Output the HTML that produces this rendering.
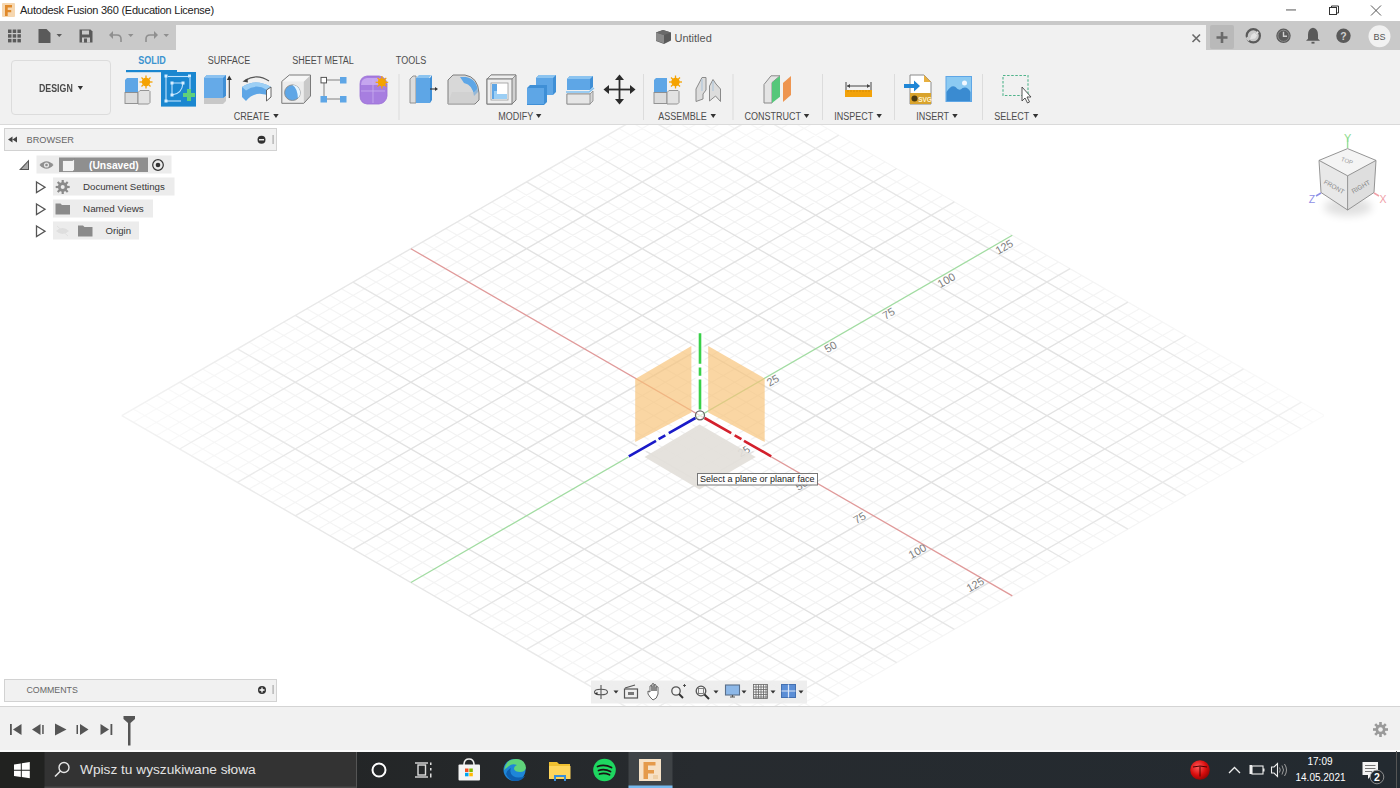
<!DOCTYPE html>
<html><head><meta charset="utf-8">
<style>
*{margin:0;padding:0;box-sizing:border-box}
html,body{width:1400px;height:788px;overflow:hidden;background:#fff;font-family:"Liberation Sans",sans-serif}
.a{position:absolute}
#title{left:0;top:0;width:1400px;height:21px;background:#fff}
#title .t{left:20px;top:4px;font-size:11px;letter-spacing:-0.25px;color:#222;white-space:nowrap}
#tabbar{left:0;top:21px;width:1400px;height:29px;background:#c9c9c9}
#tab{left:176px;top:25px;width:1030px;height:26px;background:#f1f1f1}
#toolbar{left:0;top:50px;width:1400px;height:75px;background:#f1f1f1;border-bottom:1px solid #dadada}
.lbl{font-size:10px;line-height:10px;color:#4d4d4d;white-space:nowrap;transform:translateX(-50%) scaleX(0.9)}
.tabl{font-size:10px;line-height:10px;color:#4d4d4d;white-space:nowrap;transform:translateX(-50%) scaleX(0.9)}
.ar{display:inline-block;width:0;height:0;border-left:3px solid transparent;border-right:3px solid transparent;border-top:4px solid #333;position:relative;top:-2px;margin-left:1px}
.sep{width:1px;top:74px;height:46px;background:#dedede}
#viewport{left:0;top:125px;width:1400px;height:581px;background:#fff;overflow:hidden}
#timeline{left:0;top:706px;width:1400px;height:46px;background:#f1f1f1;border-top:1px solid #d4d4d4}
#taskbar{left:0;top:751px;width:1400px;height:37px;background:#232629}
</style></head><body>
<svg width="1400" height="788" viewBox="0 0 1400 788" style="position:absolute;left:0;top:0">
<defs><radialGradient id="gf" cx="0.5" cy="0.5" r="0.5"><stop offset="0.6" stop-color="#fff" stop-opacity="1"/><stop offset="1" stop-color="#fff" stop-opacity="0.4"/></radialGradient><mask id="gm"><rect x="121" y="68" width="1203" height="694" fill="url(#gf)"/></mask></defs>
<g mask="url(#gm)">
<path d="M133.3 422.3L734.7 75.0M133.3 408.9L734.7 756.2M144.9 429.0L746.3 81.7M144.9 402.2L746.3 749.5M156.4 435.6L757.8 88.4M156.4 395.6L757.8 742.8M168.0 442.3L769.4 95.1M168.0 388.9L769.4 736.1M191.1 455.7L792.5 108.4M191.1 375.5L792.5 722.8M202.7 462.3L804.1 115.1M202.7 368.9L804.1 716.1M214.3 469.0L815.6 121.8M214.3 362.2L815.6 709.4M225.8 475.7L827.2 128.5M225.8 355.5L827.2 702.7M249.0 489.1L850.3 141.8M249.0 342.1L850.3 689.4M260.5 495.7L861.9 148.5M260.5 335.5L861.9 682.7M272.1 502.4L873.5 155.2M272.1 328.8L873.5 676.0M283.7 509.1L885.0 161.9M283.7 322.1L885.0 669.3M306.8 522.4L908.2 175.2M306.8 308.8L908.2 656.0M318.4 529.1L919.7 181.9M318.4 302.1L919.7 649.3M329.9 535.8L931.3 188.6M329.9 295.4L931.3 642.6M341.5 542.5L942.9 195.2M341.5 288.7L942.9 636.0M364.6 555.8L966.0 208.6M364.6 275.4L966.0 622.6M376.2 562.5L977.6 215.3M376.2 268.7L977.6 615.9M387.7 569.2L989.1 222.0M387.7 262.0L989.1 609.2M399.3 575.9L1000.7 228.6M399.3 255.3L1000.7 602.6M422.4 589.2L1023.8 242.0M422.4 242.0L1023.8 589.2M434.0 595.9L1035.4 248.7M434.0 235.3L1035.4 582.5M445.6 602.6L1047.0 255.3M445.6 228.6L1047.0 575.9M457.1 609.2L1058.5 262.0M457.1 222.0L1058.5 569.2M480.3 622.6L1081.6 275.4M480.3 208.6L1081.6 555.8M491.8 629.3L1093.2 282.1M491.8 201.9L1093.2 549.1M503.4 636.0L1104.8 288.7M503.4 195.2L1104.8 542.5M515.0 642.6L1116.3 295.4M515.0 188.6L1116.3 535.8M538.1 656.0L1139.5 308.8M538.1 175.2L1139.5 522.4M549.7 662.7L1151.0 315.4M549.7 168.5L1151.0 515.8M561.2 669.3L1162.6 322.1M561.2 161.9L1162.6 509.1M572.8 676.0L1174.2 328.8M572.8 155.2L1174.2 502.4M595.9 689.4L1197.3 342.1M595.9 141.8L1197.3 489.1M607.5 696.1L1208.9 348.8M607.5 135.1L1208.9 482.4M619.0 702.7L1220.4 355.5M619.0 128.5L1220.4 475.7M630.6 709.4L1232.0 362.2M630.6 121.8L1232.0 469.0M653.7 722.8L1255.1 375.5M653.7 108.4L1255.1 455.7M665.3 729.4L1266.7 382.2M665.3 101.8L1266.7 449.0M676.9 736.1L1278.2 388.9M676.9 95.1L1278.2 442.3M688.4 742.8L1289.8 395.6M688.4 88.4L1289.8 435.6M711.6 756.2L1312.9 408.9M711.6 75.0L1312.9 422.3M723.1 762.8L1324.5 415.6M723.1 68.4L1324.5 415.6" stroke="#f2f2f2" stroke-width="1.2" fill="none"/>
<path d="M121.8 415.6L723.1 68.4M121.8 415.6L723.1 762.8M179.6 449.0L781.0 101.8M179.6 382.2L781.0 729.4M237.4 482.4L838.8 135.1M237.4 348.8L838.8 696.1M295.2 515.8L896.6 168.5M295.2 315.4L896.6 662.7M353.0 549.1L954.4 201.9M353.0 282.1L954.4 629.3M468.7 615.9L1070.1 268.7M468.7 215.3L1070.1 562.5M526.5 649.3L1127.9 302.1M526.5 181.9L1127.9 529.1M584.4 682.7L1185.7 335.5M584.4 148.5L1185.7 495.7M642.2 716.1L1243.6 368.9M642.2 115.1L1243.6 462.3M700.0 749.5L1301.4 402.2M700.0 81.7L1301.4 429.0" stroke="#e2e2e2" stroke-width="1.4" fill="none"/>
</g>
<line x1="410.9" y1="248.7" x2="1012.3" y2="595.9" stroke="#e09a9a" stroke-width="1.3"/>
<line x1="410.9" y1="582.5" x2="1012.3" y2="235.3" stroke="#a2dca2" stroke-width="1.3"/>
<text x="772.8" y="380.2" transform="rotate(-30 772.8 380.2)" font-family="Liberation Sans" font-size="11" fill="#7c7c7c" text-anchor="middle" dominant-baseline="central">25</text>
<text x="830.6" y="346.8" transform="rotate(-30 830.6 346.8)" font-family="Liberation Sans" font-size="11" fill="#7c7c7c" text-anchor="middle" dominant-baseline="central">50</text>
<text x="888.5" y="313.4" transform="rotate(-30 888.5 313.4)" font-family="Liberation Sans" font-size="11" fill="#7c7c7c" text-anchor="middle" dominant-baseline="central">75</text>
<text x="946.3" y="280.1" transform="rotate(-30 946.3 280.1)" font-family="Liberation Sans" font-size="11" fill="#7c7c7c" text-anchor="middle" dominant-baseline="central">100</text>
<text x="1004.1" y="246.7" transform="rotate(-30 1004.1 246.7)" font-family="Liberation Sans" font-size="11" fill="#7c7c7c" text-anchor="middle" dominant-baseline="central">125</text>
<text x="743.8" y="451.0" transform="rotate(-30 743.8 451.0)" font-family="Liberation Sans" font-size="11" fill="#7c7c7c" text-anchor="middle" dominant-baseline="central">25</text>
<text x="801.6" y="484.4" transform="rotate(-30 801.6 484.4)" font-family="Liberation Sans" font-size="11" fill="#7c7c7c" text-anchor="middle" dominant-baseline="central">50</text>
<text x="859.5" y="517.8" transform="rotate(-30 859.5 517.8)" font-family="Liberation Sans" font-size="11" fill="#7c7c7c" text-anchor="middle" dominant-baseline="central">75</text>
<text x="917.3" y="551.1" transform="rotate(-30 917.3 551.1)" font-family="Liberation Sans" font-size="11" fill="#7c7c7c" text-anchor="middle" dominant-baseline="central">100</text>
<text x="975.1" y="584.5" transform="rotate(-30 975.1 584.5)" font-family="Liberation Sans" font-size="11" fill="#7c7c7c" text-anchor="middle" dominant-baseline="central">125</text>
</svg>
<!-- viewport objects -->
<svg class="a" style="left:0;top:0" width="1400" height="788" viewBox="0 0 1400 788">
<!-- bottom plane -->
<path d="M699.5 424.5 L755.8 457 L699.5 489.5 L644.5 457z" fill="#e3dfda" opacity="0.92"/>
<!-- orange planes -->
<path d="M635.2 379 L691.4 346 V412.5 L635.2 442z" fill="#f7c278" opacity="0.68"/>
<path d="M708.2 346 L764.7 378.5 V442 L708.2 412.5z" fill="#f7c278" opacity="0.68"/>
<!-- white halo for axes -->
<g stroke="#fff" stroke-width="9" opacity="0.85" stroke-linecap="butt">
<line x1="700" y1="333" x2="700" y2="409"/>
</g>
<g stroke="#fff" stroke-width="9" opacity="0.8">
<line x1="695" y1="418" x2="628" y2="456.5"/>
<line x1="705" y1="418" x2="771.5" y2="456.5"/>
</g>
<!-- axes -->
<g stroke-width="2.6">
<path d="M700 333.3 V363.8 M700 367.6 V375.8 M700 379.6 V409.5" stroke="#38d048"/>
<path d="M695.4 418 L668.8 433.2 M665.3 435.4 L658.6 439.2 M656 440.8 L628.8 456.3" stroke="#1a1ac8"/>
<path d="M704.6 418 L731.2 433.2 M734.7 435.4 L741.4 439.2 M744 440.8 L771.2 456.3" stroke="#d3202c"/>
</g>
<circle cx="700" cy="415.3" r="4.5" fill="#fff" fill-opacity="0.6" stroke="#666" stroke-width="1.3"/>
<!-- tooltip -->
<rect x="697.5" y="473.5" width="120" height="11.5" fill="#fff" fill-opacity="0.85" stroke="#777" stroke-width="1"/>
<!-- viewcube -->
<g>
<defs><filter id="vcb" x="-50%" y="-50%" width="200%" height="200%"><feGaussianBlur stdDeviation="4"/></filter></defs><ellipse cx="1348" cy="207" rx="24" ry="9" fill="#000" opacity="0.12" filter="url(#vcb)"/>
<path d="M1319 160.4 L1347.6 148.6 L1376 160.4 L1374 192.5 L1347.6 210 L1321 192.5z" fill="#ececec"/>
<path d="M1319 160.4 L1347.6 148.6 L1376 160.4 L1347.6 175.8z" fill="#f4f4f4"/>
<path d="M1347.6 175.8 L1376 160.4 L1374 192.5 L1347.6 210z" fill="#dedede"/><path d="M1321 160.4 L1347.6 175.8 V210 L1321 192.5z" fill="#e8e8e8"/>
<g fill="none" stroke="#8a8a8a" stroke-width="0.9">
<path d="M1319 160.4 L1347.6 148.6 L1376 160.4 L1374 192.5 L1347.6 210 L1321 192.5z"/>
<path d="M1319 160.4 L1347.6 175.8 L1376 160.4 M1347.6 175.8 V210"/>
</g>
<text x="1347" y="163" font-family="Liberation Sans" font-size="6" fill="#999" text-anchor="middle" transform="rotate(20 1347 161)">TOP</text>
<text x="1334" y="189" font-family="Liberation Sans" font-size="6.5" fill="#888" text-anchor="middle" transform="rotate(30 1334 187)">FRONT</text>
<text x="1361" y="189" font-family="Liberation Sans" font-size="6.5" fill="#888" text-anchor="middle" transform="rotate(-30 1361 187)">RIGHT</text>
<line x1="1347.6" y1="138" x2="1347.6" y2="148" stroke="#9ee09e" stroke-width="1.5"/>
<text x="1347.6" y="141.5" font-family="Liberation Sans" font-size="11" fill="#8fdc8f" text-anchor="middle">Y</text>
<line x1="1316" y1="196" x2="1321" y2="193" stroke="#8f8fe6" stroke-width="1.5"/>
<text x="1312" y="202.5" font-family="Liberation Sans" font-size="10.5" fill="#8f8fe6" text-anchor="middle">Z</text>
<line x1="1374" y1="193" x2="1379" y2="196" stroke="#f0a0a8" stroke-width="1.5"/>
<text x="1383" y="202.5" font-family="Liberation Sans" font-size="10.5" fill="#f0a0a8" text-anchor="middle">X</text>
</g>
<!-- browser panel -->
<rect x="4.5" y="128.5" width="272" height="22" fill="#f1f1f1" stroke="#d2d2d2" stroke-width="1"/>
<path d="M8 139.5 l4.5-3 v6z M12.5 139.5 l4.5-3 v6z" fill="#444"/>
<circle cx="261.5" cy="139.7" r="4" fill="#333"/><rect x="259" y="139.1" width="5" height="1.3" fill="#fff"/>
<rect x="272.5" y="135" width="1.2" height="9" fill="#aaa"/>
<!-- row 1 -->
<rect x="36.5" y="155.5" width="135" height="18" fill="#ececec"/>
<path d="M19 170 L29 159.5 V170z" fill="#555"/><path d="M21.5 169 L28 162 V169z" fill="#aaa"/>
<path d="M39.5 165 q7-7.5 14 0 q-7 7.5 -14 0z" fill="#8f8f8f"/><circle cx="46.5" cy="165" r="2.6" fill="#e6e6e6"/><circle cx="46.5" cy="165" r="1.3" fill="#8f8f8f"/>
<rect x="59" y="157.5" width="89" height="14.5" fill="#8f8f8f"/>
<path d="M62.5 160.5 h10 l2-1.5 v11 l-2 1.5 h-10z" fill="#f2f2f2" stroke="#777" stroke-width="0.6"/>
<circle cx="158" cy="165" r="5.3" fill="none" stroke="#333" stroke-width="1.2"/><circle cx="158" cy="165" r="2.3" fill="#333"/>
<!-- row 2 -->
<rect x="53" y="177.5" width="121.5" height="18" fill="#ececec"/>
<path d="M36.5 182 L45 187.2 L36.5 192.5z" fill="none" stroke="#555" stroke-width="1.3"/>
<circle cx="62.7" cy="187" r="4.8" fill="#8a8a8a"/><circle cx="62.7" cy="187" r="2" fill="#ececec"/>
<g stroke="#8a8a8a" stroke-width="2.2"><line x1="62.7" y1="180" x2="62.7" y2="194"/><line x1="55.7" y1="187" x2="69.7" y2="187"/><line x1="57.7" y1="182" x2="67.7" y2="192"/><line x1="67.7" y1="182" x2="57.7" y2="192"/></g>
<circle cx="62.7" cy="187" r="2" fill="#ececec"/>
<!-- row 3 -->
<rect x="53" y="199.5" width="100" height="18" fill="#ececec"/>
<path d="M36.5 204 L45 209.2 L36.5 214.5z" fill="none" stroke="#555" stroke-width="1.3"/>
<path d="M55.5 203.5 h5 l1.5 1.5 h8 v9.5 h-14.5z" fill="#8a8a8a"/>
<!-- row 4 -->
<rect x="53" y="221.5" width="86" height="18" fill="#ececec"/>
<path d="M36.5 226 L45 231.2 L36.5 236.5z" fill="none" stroke="#555" stroke-width="1.3"/>
<path d="M56 231 q6.5-6 13 0 q-6.5 6 -13 0z" fill="#dedede"/><line x1="57" y1="226" x2="68" y2="236" stroke="#e0e0e0" stroke-width="1"/>
<path d="M78 225.5 h5 l1.5 1.5 h8 v9.5 h-14.5z" fill="#8a8a8a"/>
<!-- comments -->
<rect x="4.5" y="679.5" width="272" height="22" fill="#f1f1f1" stroke="#d2d2d2" stroke-width="1"/>
<circle cx="262" cy="690" r="4" fill="#333"/><path d="M259.5 690 h5 M262 687.5 v5" stroke="#fff" stroke-width="1.3"/>
<rect x="272.5" y="685" width="1.2" height="9" fill="#aaa"/>
<!-- nav bar -->
<rect x="591" y="680.5" width="216" height="23" fill="#ececec" opacity="0.9"/>
</svg>
<div class="a" style="left:26.5px;top:134.5px;font-size:9.2px;line-height:10px;color:#666;white-space:nowrap">BROWSER</div>
<div class="a" style="left:89px;top:159.5px;font-size:10.3px;line-height:11px;font-weight:bold;color:#fff;white-space:nowrap">(Unsaved)</div>
<div class="a" style="left:83px;top:180.5px;font-size:9.7px;line-height:11px;color:#383838;white-space:nowrap">Document Settings</div>
<div class="a" style="left:83px;top:202.5px;font-size:9.9px;line-height:11px;color:#383838;white-space:nowrap">Named Views</div>
<div class="a" style="left:105.5px;top:224.5px;font-size:9.6px;line-height:11px;color:#383838;white-space:nowrap">Origin</div>
<div class="a" style="left:26.5px;top:685px;font-size:8.8px;line-height:10px;color:#666;white-space:nowrap">COMMENTS</div>
<div class="a" style="left:700px;top:474px;font-size:9px;line-height:11px;color:#222;white-space:nowrap">Select a plane or planar face</div>

<div id="title" class="a">
  <div class="t a">Autodesk Fusion 360 (Education License)</div>
</div>
<div id="tabbar" class="a"></div>
<div id="tab" class="a"></div>
<div id="toolbar" class="a"></div>
<!-- title bar icon + window controls -->
<svg class="a" style="left:0;top:0" width="1400" height="50" viewBox="0 0 1400 50">
<rect x="2" y="3" width="13" height="14" rx="1" fill="#f6d7b0"/>
<path d="M5 5 h7 v2.5 h-4.3 v2.5 h3.5 v2.3 h-3.5 v3.7 h-2.7z" fill="#e0892a"/>
<rect x="1286" y="9.5" width="10" height="0.9" fill="#444"/>
<rect x="1329.5" y="7.5" width="7" height="7" fill="none" stroke="#333" stroke-width="1"/>
<path d="M1331.5 7.5 v-1.5 h7 v7 h-2" fill="none" stroke="#333" stroke-width="1"/>
<path d="M1371 5.5 l10 10 M1381 5.5 l-10 10" stroke="#444" stroke-width="0.9"/>
<!-- tabbar left icons -->
<g fill="#5a5a5a">
<rect x="8" y="29.5" width="3.5" height="3.5"/><rect x="12.7" y="29.5" width="3.5" height="3.5"/><rect x="17.4" y="29.5" width="3.5" height="3.5"/>
<rect x="8" y="34.2" width="3.5" height="3.5"/><rect x="12.7" y="34.2" width="3.5" height="3.5"/><rect x="17.4" y="34.2" width="3.5" height="3.5"/>
<rect x="8" y="38.9" width="3.5" height="3.5"/><rect x="12.7" y="38.9" width="3.5" height="3.5"/><rect x="17.4" y="38.9" width="3.5" height="3.5"/>
<path d="M38.5 29 h8 l4 4 v10 h-12z"/>
<path d="M56.5 34 h5.5 l-2.75 3z"/>
<path d="M79.5 29.5 h11 l2 2 v11 h-13z"/>
</g>
<rect x="82" y="30.5" width="7" height="4" fill="#c9c9c9"/>
<rect x="82" y="37.5" width="8" height="5" fill="#c9c9c9"/>
<rect x="84" y="38.5" width="3" height="4" fill="#5a5a5a"/>
<g fill="none" stroke="#8f8f8f" stroke-width="1.6"><path d="M111 35 h6 q4 0 4 4 v3"/><path d="M156 35 h-6 q-4 0 -4 4 v3"/></g>
<path d="M109 35 l4-4 v8z M158 35 l-4-4 v8z" fill="#8f8f8f"/>
<path d="M128 34 h5.5 l-2.75 3z M163.5 34 h5.5 l-2.75 3z" fill="#8f8f8f"/>
<!-- tab content -->
<path d="M656 32.5 l7-2.5 l8 2.5 v8 l-7 3.5 l-8-3z" fill="#5a5a5a"/>
<path d="M656 32.5 l8 2.5 v8.5 l-8-3z" fill="#8a8a8a"/>
<path d="M656 32.5 l7-2.5 l8 2.5 l-7 2.5z" fill="#6a6a6a"/>
<path d="M1192.5 34.5 l7.5 7.5 M1200 34.5 l-7.5 7.5" stroke="#6a6a6a" stroke-width="1.6"/>
<rect x="1210" y="25" width="24" height="24" rx="2" fill="#b9b9b9"/>
<path d="M1222 32 v11 M1216.5 37.5 h11" stroke="#6a6a6a" stroke-width="2.6"/>
<!-- right icons -->
<g transform="translate(0 -1.2)">
<circle cx="1253.3" cy="37" r="6.6" fill="none" stroke="#5a5a5a" stroke-width="2.2"/>
<rect x="1246" y="38.5" width="4" height="3" fill="#c9c9c9" transform="rotate(35 1248 40)"/>
<path d="M1250 40.5 l1.5-4.5 l3-2 l1.2 1.2 l1.8-3 l1.4 1.4 l-3 1.8 l1.2 1.2 l-2 3z" fill="#e2e2e2"/>
<circle cx="1283.5" cy="37" r="7.2" fill="#5a5a5a"/>
<circle cx="1283.5" cy="37" r="5.6" fill="none" stroke="#8f8f8f" stroke-width="0.9"/>
<path d="M1283.5 33 v4.5 h3.5" stroke="#d0d0d0" stroke-width="1.4" fill="none"/>
<path d="M1313 29 q-5 1 -5 7 v4 l-2 2 h14 l-2-2 v-4 q0-6 -5-7z" fill="#5a5a5a"/>
<rect x="1311.5" y="43" width="3" height="1.8" fill="#5a5a5a"/>
<circle cx="1343.5" cy="37" r="7.2" fill="#5a5a5a"/>
<text x="1343.5" y="41" font-family="Liberation Sans" font-size="10.5" font-weight="bold" fill="#d0d0d0" text-anchor="middle">?</text>
<circle cx="1379.5" cy="37.5" r="11" fill="#f1f1f1"/>
<text x="1379.5" y="41" font-family="Liberation Sans" font-size="9" fill="#555" text-anchor="middle">BS</text>
</g>
</svg>
<div class="a" style="left:674.5px;top:32.2px;font-size:11px;line-height:13px;color:#555;white-space:nowrap">Untitled</div>

<div class="a" style="left:10.5px;top:60px;width:100px;height:55px;border:1px solid #dcdcdc;border-radius:4px;background:#f1f1f1"></div>
<div class="a" style="left:38.5px;top:84px;font-size:10px;line-height:10px;font-weight:bold;color:#4a4a4a;white-space:nowrap;transform:scaleX(0.88);transform-origin:0 0">DESIGN <span class="ar" style="margin-left:3px"></span></div>
<div class="a tabl" style="left:151.5px;top:56px;color:#3b93cf;font-weight:bold">SOLID</div>
<div class="a tabl" style="left:229px;top:56px">SURFACE</div>
<div class="a tabl" style="left:323px;top:56px">SHEET METAL</div>
<div class="a tabl" style="left:411px;top:56px">TOOLS</div>
<div class="a lbl" style="left:256px;top:111.8px">CREATE <span class="ar"></span></div>
<div class="a lbl" style="left:520px;top:111.8px">MODIFY <span class="ar"></span></div>
<div class="a lbl" style="left:687px;top:111.8px">ASSEMBLE <span class="ar"></span></div>
<div class="a lbl" style="left:777px;top:111.8px">CONSTRUCT <span class="ar"></span></div>
<div class="a lbl" style="left:858px;top:111.8px">INSPECT <span class="ar"></span></div>
<div class="a lbl" style="left:937px;top:111.8px">INSERT <span class="ar"></span></div>
<div class="a lbl" style="left:1016px;top:111.8px">SELECT <span class="ar"></span></div>
<svg class="a" style="left:0;top:0" width="1400" height="125" viewBox="0 0 1400 125">
<!-- solid underline + sketch highlight -->
<rect x="126" y="70" width="51" height="2.2" fill="#1b87d0"/>
<rect x="161" y="72" width="35" height="34.6" fill="#1b87d0"/>
<!-- sketch contents -->
<g stroke="#bfe3ff" stroke-width="1.1" fill="none">
<line x1="166" y1="76" x2="166" y2="101"/><line x1="166" y1="101" x2="181" y2="101"/>
<line x1="168" y1="76.5" x2="189" y2="76.5"/><line x1="190" y1="78" x2="190" y2="92"/>
<path d="M172 83 L183 83 Q182 94 172 95 Z"/>
</g>
<g fill="#d6eeff"><rect x="164.5" y="74.5" width="3" height="3"/><rect x="188" y="74.5" width="3" height="3"/><rect x="164.5" y="99.5" width="3" height="3"/><rect x="170.5" y="81.5" width="3" height="3"/><rect x="181.5" y="81.5" width="3" height="3"/><rect x="170.5" y="93.5" width="3" height="3"/></g>
<path d="M183 93h4v-4h4v4h4v4h-4v4h-4v-4h-4z" fill="#5fd07a"/>
<!-- new component -->
<g>
<path d="M125 80 l2-2 h11 v15 h-13z" fill="#5ea6e6"/>
<rect x="125" y="92.5" width="13" height="11" fill="#dcdcdc" stroke="#8a8a8a" stroke-width="0.9"/>
<path d="M138 92.5 l2-2 h9 l1 1 v11 l-1.5 1.5 h-10.5z" fill="#e2e2e2" stroke="#8a8a8a" stroke-width="0.9"/>
<circle cx="146" cy="82" r="4.2" fill="#f5a300"/>
<g stroke="#f5a300" stroke-width="1.3"><line x1="146" y1="75.5" x2="146" y2="88.5"/><line x1="139.5" y1="82" x2="152.5" y2="82"/><line x1="141.5" y1="77.5" x2="150.5" y2="86.5"/><line x1="150.5" y1="77.5" x2="141.5" y2="86.5"/></g>
</g>
<!-- extrude -->
<g>
<path d="M204 78 l3-3 h19 v21 l-3 3 h-19z" fill="#3f8fd6"/>
<rect x="204" y="78" width="19" height="20" fill="#65aae8"/>
<path d="M204 78 l3-3 h19 l-3 3z" fill="#8cc2f0"/>
<path d="M204 98 h19 l3-2 v5 l-3 3 h-19z" fill="#c8c8c8"/>
<line x1="229.3" y1="78" x2="229.3" y2="98" stroke="#444" stroke-width="1.1"/>
<path d="M226.8 80 l2.5-4.5 l2.5 4.5z" fill="#333"/>
</g>
<!-- revolve -->
<g>
<path d="M245 80.5 Q257 73 269 81" stroke="#555" stroke-width="1.1" fill="none"/>
<path d="M242.5 81.5 l5-3.2 l0.4 4.2z" fill="#444"/>
<path d="M242 87 Q256 78 271 87 V97 Q256 89 246 101 L242 97 Z" fill="#5ea6e6"/>
<path d="M242 87 Q256 78 271 87 L267 90 Q256 83 246 90.5 Z" fill="#9ccff5"/>
<path d="M266.5 90 L271 87 V97 L266.5 101 Z" fill="#fff" stroke="#555" stroke-width="0.9"/>
</g>
<!-- hole -->
<g>
<path d="M281.8 81.4 L289.3 75 H310.5 V96 L303.8 103.3 H281.8 Z" fill="#ececec"/>
<path d="M303.8 81.4 L310.5 75 V96 L303.8 103.3 Z" fill="#c9c9c9"/>
<path d="M281.8 81.4 L289.3 75 H310.5 L303.8 81.4 Z" fill="#f6f6f6"/>
<path d="M281.8 81.4 L289.3 75 H310.5 V96 L303.8 103.3 H281.8 Z" fill="none" stroke="#7a7a7a" stroke-width="1"/>
<circle cx="292.4" cy="92.7" r="7.8" fill="#5ea6e6" stroke="#8a8a8a" stroke-width="0.9"/>
<path d="M292.4 84.9 A7.8 7.8 0 0 1 297.9 98.2 Q297.5 88 292.4 84.9 Z" fill="#e6f5ff"/>
</g>
<!-- pattern -->
<g>
<g stroke="#8a8a8a" stroke-width="1.1"><line x1="327" y1="80" x2="340" y2="80"/><line x1="324" y1="83" x2="324" y2="96"/><line x1="327" y1="99" x2="340" y2="99"/></g>
<rect x="321" y="77.4" width="5.5" height="5.5" fill="#fff" stroke="#555" stroke-width="1"/>
<rect x="340" y="77" width="6.5" height="6.5" fill="#5ea6e6"/>
<rect x="320.5" y="96" width="6.5" height="6.5" fill="#5ea6e6"/>
<rect x="340" y="96" width="6.5" height="6.5" fill="#5ea6e6"/>
</g>
<!-- form -->
<g>
<path d="M360 84 q0-7 7-8 h12 q7 1 8 8 v12 q-1 7 -8 8 h-12 q-7-1 -7-8z" fill="#a77ee0" stroke="#9a6fd6" stroke-width="0.8"/>
<path d="M361 85 q0-6 6-7 h11 q5 1 6 7z" fill="#c5a5ef"/>
<g stroke="#c9b0f0" stroke-width="0.8"><line x1="373" y1="79" x2="373" y2="103"/><line x1="361" y1="91" x2="385" y2="91"/></g>
<circle cx="381.9" cy="82.3" r="4" fill="#f5a300"/>
<g stroke="#f5a300" stroke-width="1.2"><line x1="381.9" y1="76" x2="381.9" y2="88.6"/><line x1="375.6" y1="82.3" x2="388.2" y2="82.3"/><line x1="377.5" y1="77.9" x2="386.3" y2="86.7"/><line x1="386.3" y1="77.9" x2="377.5" y2="86.7"/></g>
</g>
<!-- press pull -->
<g>
<path d="M410 79 l3-3 h3 v27 h-6z" fill="#dcdcdc" stroke="#888" stroke-width="0.9"/>
<rect x="416" y="78" width="14" height="25" fill="#5ea6e6"/>
<path d="M416 78 l3-3 h12 l-2 3z" fill="#8cc4f0"/>
<path d="M430 78 l2-3 v25 l-2 3z" fill="#3f8fd6"/>
<line x1="430" y1="89" x2="436" y2="89" stroke="#333" stroke-width="1.1"/><path d="M435 87 l3 2 l-3 2z" fill="#333"/>
</g>
<!-- fillet -->
<g>
<path d="M448 80 l5-5 h12 q13 2 14 18 v7 l-4 4 h-27z" fill="#d8d8d8" stroke="#7d7d7d" stroke-width="1"/>
<path d="M460 77 h6 q11 2 12 15 l-4 4 q-1 -11 -10 -13z" fill="#5ea6e6"/>
<path d="M452 92 h22 l4-4 v12 l-4 4 h-26z" fill="#c9c9c9" opacity="0.5"/>
</g>
<!-- shell -->
<g>
<path d="M487 79 l4-4 h25 v25 l-4 4 h-25z" fill="#d0d0d0" stroke="#7d7d7d" stroke-width="1"/>
<path d="M487 79 l4-4 h25 l-4 4z" fill="#eee" stroke="#7d7d7d" stroke-width="0.8"/>
<rect x="487" y="79" width="25" height="25" fill="#efefef" stroke="#7d7d7d" stroke-width="1"/>
<rect x="491" y="83" width="17" height="17" fill="#fff" stroke="#9a9a9a" stroke-width="0.8"/>
<path d="M492 84 h5 v10 h10 v5 h-15z" fill="#5ea6e6"/>
<path d="M494 91 h3 v3 h10 v5 h-13z" fill="#9ccff5"/>
</g>
<!-- combine -->
<g>
<path d="M536 78 l3-3 h17 v17 l-3 3 h-17z" fill="#3f8fd6"/>
<rect x="536" y="78" width="17" height="17" fill="#5ea6e6"/>
<path d="M527 88 l3-3 h17 v17 l-3 3 h-17z" fill="#3f8fd6"/>
<rect x="527" y="88" width="17" height="16" fill="#5ea6e6"/>
<path d="M536 78 l3-3 h17 l-3 3z" fill="#8cc4f0"/>
</g>
<!-- split -->
<g>
<path d="M567 79 l3-3 h23 v11 l-3 3 h-23z" fill="#3f8fd6"/>
<rect x="567" y="79" width="23" height="11" fill="#5ea6e6"/>
<path d="M567 79 l3-3 h23 l-3 3z" fill="#8cc4f0"/>
<path d="M566 92 h23 l5-4" stroke="#7ec0f2" stroke-width="1.5" fill="none"/>
<path d="M567 94 h23 l3-3 v10 l-3 3 h-23z" fill="#d6d6d6" stroke="#888" stroke-width="0.8"/>
<rect x="567" y="94" width="23" height="10" fill="#e6e6e6" stroke="#888" stroke-width="0.8"/>
</g>
<!-- move -->
<g stroke="#2b2b2b" stroke-width="1.8"><line x1="619.5" y1="78" x2="619.5" y2="101"/><line x1="607" y1="89.5" x2="632" y2="89.5"/></g>
<g fill="#2b2b2b"><path d="M615 80 l4.5-5.5 l4.5 5.5z"/><path d="M615 99 l4.5 5.5 l4.5-5.5z"/><path d="M609 85 l-5.5 4.5 l5.5 4.5z"/><path d="M630 85 l5.5 4.5 l-5.5 4.5z"/></g>
<!-- assemble new component -->
<g>
<path d="M654 80 l2-2 h11 v15 h-13z" fill="#5ea6e6"/>
<rect x="654" y="92.5" width="13" height="11" fill="#dcdcdc" stroke="#8a8a8a" stroke-width="0.9"/>
<path d="M667 92.5 l2-2 h9 l1 1 v11 l-1.5 1.5 h-10.5z" fill="#e2e2e2" stroke="#8a8a8a" stroke-width="0.9"/>
<circle cx="675.5" cy="82" r="4.2" fill="#f5a300"/>
<g stroke="#f5a300" stroke-width="1.3"><line x1="675.5" y1="75.5" x2="675.5" y2="88.5"/><line x1="669" y1="82" x2="682" y2="82"/><line x1="671" y1="77.5" x2="680" y2="86.5"/><line x1="680" y1="77.5" x2="671" y2="86.5"/></g>
</g>
<!-- joint -->
<g fill="#dcdcdc" stroke="#8a8a8a" stroke-width="1">
<path d="M696 89 L702 77.5 H706 V90 L703 94 V99 L696 101.5 Z"/>
<path d="M709.5 86 L713 79.5 L716 84 L720.5 89 V101.5 L715.5 96 L709.5 101 Z"/>
</g>
<path d="M702 79 v12 M713 81 v10" stroke="#a9c4dc" stroke-width="1"/>
<!-- construct -->
<g>
<path d="M764 84.5 L771 75.8 H780 L772 82.6 V103 H764 Z" fill="#e4e4e4" stroke="#8a8a8a" stroke-width="1"/>
<path d="M772 82.6 L780 75.9 V96.7 L772 103 Z" fill="#55c77a"/>
<path d="M783 83 L791 76 V95 L783 102 Z" fill="#ee9550"/>
</g>
<!-- inspect -->
<g>
<rect x="845" y="90" width="27" height="7" fill="#f2a20a"/>
<g stroke="#c98200" stroke-width="0.7"><line x1="848" y1="90" x2="848" y2="92"/><line x1="851" y1="90" x2="851" y2="92"/><line x1="854" y1="90" x2="854" y2="92"/><line x1="857" y1="90" x2="857" y2="92"/><line x1="860" y1="90" x2="860" y2="92"/><line x1="863" y1="90" x2="863" y2="92"/><line x1="866" y1="90" x2="866" y2="92"/><line x1="869" y1="90" x2="869" y2="92"/></g>
<g stroke="#444" stroke-width="1"><line x1="846" y1="82" x2="846" y2="90"/><line x1="871" y1="82" x2="871" y2="90"/><line x1="847" y1="86" x2="870" y2="86"/></g>
<path d="M847 86 l3-2 v4z M870 86 l-3-2 v4z" fill="#444"/>
</g>
<!-- insert svg -->
<g>
<path d="M910 75 h14 l7 7 v22 h-21z" fill="#fff" stroke="#8a8a8a" stroke-width="1"/>
<path d="M924 75 l7 7 h-7z" fill="#e8b040"/>
<rect x="910" y="93" width="21" height="11" fill="#d9a32c"/>
<circle cx="914.5" cy="98.5" r="3" fill="#4a3a10"/>
<text x="925" y="101.5" font-family="Liberation Sans" font-size="6.5" font-weight="bold" fill="#fff3cc" text-anchor="middle">SVG</text>
<path d="M904 84 h10 v-3.5 l6 5.5 l-6 5.5 v-3.5 h-10z" fill="#1f86d6"/>
</g>
<!-- insert image -->
<g>
<rect x="945.5" y="76" width="26.5" height="26" fill="#5ea6e6"/>
<rect x="946.5" y="77" width="24.5" height="24" fill="#8ccaf2"/>
<path d="M946.5 101 v-9 q5-8 9-5 q4 5 7 1 q5-2 8 4 v9z" fill="#3a8bd1"/>
<circle cx="964.5" cy="83" r="2.5" fill="#f2f8ff"/>
</g>
<!-- select -->
<g>
<rect x="1003" y="75.5" width="25" height="20" fill="none" stroke="#4fb38a" stroke-width="1.1" stroke-dasharray="2.5 1.6"/>
<path d="M1022 87 v14 l3-3 l2.5 5 l2-1 l-2.5-5 h4z" fill="#fff" stroke="#444" stroke-width="0.9"/>
</g>
<!-- separators -->
<g fill="#dcdcdc"><rect x="398.5" y="74" width="1" height="46"/><rect x="643" y="74" width="1" height="46"/><rect x="732.5" y="74" width="1" height="46"/><rect x="822" y="74" width="1" height="46"/><rect x="894" y="74" width="1" height="46"/><rect x="982" y="74" width="1" height="46"/></g>
</svg>

<div id="timeline" class="a"></div>
<div id="taskbar" class="a"></div>
<svg class="a" style="left:0;top:670px" width="1400" height="118" viewBox="0 670 1400 118">
<!-- nav bar icons -->
<g fill="none" stroke="#555" stroke-width="1.1">
<ellipse cx="601" cy="692" rx="6.5" ry="2.8"/>
<line x1="601" y1="685" x2="601" y2="699"/>
</g>
<path d="M597.5 692 l-3 1.5 l3 1.5z" fill="#333"/>
<path d="M613.5 690.5 h5 l-2.5 3z M713.5 690.5 h5 l-2.5 3z M741.5 690.5 h5 l-2.5 3z M770.5 690.5 h5 l-2.5 3z M798.5 690.5 h5 l-2.5 3z" fill="#333"/>
<rect x="624.5" y="689" width="13" height="9" fill="none" stroke="#555" stroke-width="1.2"/>
<rect x="628" y="692" width="6" height="3" fill="#777"/>
<path d="M625 688 l10-3" stroke="#555" stroke-width="1.1"/>
<path d="M650 697 q-3-3 -2-6 l2 1 v-6 q1-1 2 0 v5 v-7 q1-1 2 0 v7 v-6 q1-1 2 0 v6 v-4 q1-1 2 0 v7 q-1 5 -5 6z" fill="#fff" stroke="#555" stroke-width="0.9"/>
<circle cx="676" cy="691" r="4.2" fill="#f4f4f4" stroke="#555" stroke-width="1.3"/>
<line x1="679" y1="694" x2="683" y2="698" stroke="#333" stroke-width="2"/>
<path d="M683 685.5 h3 M684.5 684 v3" stroke="#444" stroke-width="0.9"/>
<circle cx="701" cy="691" r="4.8" fill="#f4f4f4" stroke="#555" stroke-width="1.3"/>
<rect x="698.5" y="688.5" width="5" height="5" fill="none" stroke="#777" stroke-width="0.9"/>
<line x1="704.5" y1="694.5" x2="709" y2="699" stroke="#333" stroke-width="2"/>
<rect x="725.5" y="685" width="14" height="10" fill="#8db8e8" stroke="#5a6f8a" stroke-width="1.1"/>
<path d="M730 697 h5 M732.5 695 v2" stroke="#555" stroke-width="1.2"/>
<g stroke="#666" stroke-width="0.8"><rect x="753.5" y="684.5" width="14" height="14" fill="#f4f4f4"/>
<path d="M756 684.5v14M758.5 684.5v14M761 684.5v14M763.5 684.5v14M766 684.5v14M753.5 687h14M753.5 689.5h14M753.5 692h14M753.5 694.5h14M753.5 697h14"/></g>
<rect x="781.5" y="684.5" width="14" height="13" fill="#5b8ed6" stroke="#4470b0" stroke-width="1"/>
<path d="M788.5 684.5 v13 M781.5 691 h14" stroke="#dde8f8" stroke-width="1.2"/>
<!-- timeline controls -->
<g fill="#555">
<rect x="10" y="724" width="1.8" height="11"/><path d="M21.5 724 v11 l-8.5-5.5z"/>
<path d="M40.5 724 v11 l-8.5-5.5z"/><rect x="42.2" y="725" width="1.5" height="9"/>
<path d="M55 723.5 v12 l11.5-6z"/>
<rect x="76.5" y="725" width="1.5" height="9"/><path d="M80 724 v11 l8.5-5.5z"/>
<path d="M100.5 724 v11 l8.5-5.5z"/><rect x="110.5" y="724" width="1.8" height="11"/>
<path d="M123.5 716 h11.5 v3 l-4.5 4 v22.5 h-2.5 v-22.5 l-4.5-4z"/>
</g>
<!-- gear -->
<g transform="translate(1380.5 729.5)">
<circle r="5" fill="#9a9a9a"/>
<g stroke="#9a9a9a" stroke-width="2.6"><line x1="0" y1="-7.5" x2="0" y2="7.5"/><line x1="-7.5" y1="0" x2="7.5" y2="0"/><line x1="-5.3" y1="-5.3" x2="5.3" y2="5.3"/><line x1="5.3" y1="-5.3" x2="-5.3" y2="5.3"/></g>
<circle r="2.3" fill="#f1f1f1"/>
</g>
<!-- taskbar -->
<defs><linearGradient id="tbg" x1="0" x2="1" y1="0" y2="0"><stop offset="0" stop-color="#20211f"/><stop offset="0.5" stop-color="#272b2f"/><stop offset="1" stop-color="#232a30"/></linearGradient></defs><rect x="0" y="750" width="1400" height="2" fill="#fbfbfb"/><rect x="0" y="752" width="1400" height="36" fill="url(#tbg)"/>
<rect x="0" y="752" width="44" height="36" fill="#212220"/>
<rect x="44.5" y="752" width="312" height="36" fill="#333333"/><rect x="356" y="752" width="1" height="36" fill="#555"/><rect x="44.5" y="786.5" width="312" height="1.5" fill="#4a4a4a"/>
<g fill="#fff"><path d="M14 764.5 l6.8-1 v6.2 h-6.8z"/><path d="M21.8 763.3 l8-1.2 v7.6 h-8z"/><path d="M14 770.7 h6.8 v6.2 l-6.8-1z"/><path d="M21.8 770.7 h8 v7.6 l-8-1.2z"/></g>
<circle cx="64" cy="767.5" r="5" fill="none" stroke="#e6e6e6" stroke-width="1.4"/>
<line x1="60.5" y1="771" x2="55" y2="776.5" stroke="#e6e6e6" stroke-width="1.6"/>
<circle cx="379" cy="770" r="6.5" fill="none" stroke="#fff" stroke-width="2"/>
<g fill="none" stroke="#ddd" stroke-width="1.4"><rect x="418" y="765" width="7.5" height="10"/><line x1="415" y1="763" x2="428" y2="763"/><line x1="415" y1="777" x2="428" y2="777"/></g>
<g fill="#ddd"><rect x="430" y="762.5" width="1.5" height="2.5"/><rect x="430" y="768" width="1.5" height="2.5"/><rect x="430" y="773.5" width="1.5" height="4"/></g>
<!-- store -->
<path d="M464 765 q0-6 5-6 q5 0 5 6" fill="none" stroke="#eee" stroke-width="1.6"/>
<rect x="458.5" y="764.5" width="21.5" height="16" rx="1" fill="#f4f4f4"/>
<rect x="465" y="768.5" width="3.5" height="3.5" fill="#f25022"/><rect x="469.3" y="768.5" width="3.5" height="3.5" fill="#7fba00"/><rect x="465" y="772.8" width="3.5" height="3.5" fill="#00a4ef"/><rect x="469.3" y="772.8" width="3.5" height="3.5" fill="#ffb900"/>
<!-- edge -->
<circle cx="514.5" cy="770" r="11" fill="#1e86d8"/>
<path d="M504 770 q2-11 12-11 q9 0 10 9 q-1 4 -6 4 q-5 0 -6-3 q0-3 3-4 q-5-2 -8 1 q-4 3 -5 4z" fill="#5fd37a"/>
<path d="M506 774 q3 7 10 7 q6 0 9-5 q-7 3 -12 0 q-4-3 -2-8 q-4 2 -5 6z" fill="#0e5fb0"/>
<!-- explorer -->
<path d="M549 762 h8 l2 2 h11 v15 h-21z" fill="#f0c030"/>
<rect x="549" y="766" width="21.5" height="13" fill="#ffd65c"/>
<path d="M554 775 h12 v6 h-2 v-4 h-8 v4 h-2z" fill="#3b8fd8"/>
<!-- spotify -->
<circle cx="604.5" cy="770" r="11.3" fill="#1ed760"/>
<g fill="none" stroke="#191414" stroke-width="1.8" stroke-linecap="round"><path d="M597.5 766.5 q7-2.5 14 1"/><path d="M598.5 770.5 q6-2 12 1"/><path d="M599.5 774 q5-1.5 10 0.8"/></g>
<!-- fusion active -->
<rect x="628.5" y="752" width="44" height="36" fill="#3f4346"/>
<rect x="628.5" y="785.5" width="44" height="2.5" fill="#76b9ed"/>
<rect x="639" y="759" width="22" height="22" fill="#f6e1c6"/>
<path d="M643.5 762 h12 v3.5 h-7.5 v4.5 h6 v3.5 h-6 v5.5 h-4.5z" fill="#e59a4a"/><rect x="653" y="775" width="5" height="4" fill="#eecfa6"/>
<!-- tray -->
<defs><radialGradient id="lb" cx="0.4" cy="0.35" r="0.7"><stop offset="0" stop-color="#ff5a5a"/><stop offset="0.6" stop-color="#d80c0c"/><stop offset="1" stop-color="#8a0505"/></radialGradient></defs>
<circle cx="1200" cy="770" r="9.8" fill="url(#lb)"/>
<path d="M1193 767 q7-2 14 0 M1200 766.5 v10" stroke="#4a0000" stroke-width="1" fill="none"/>
<path d="M1229 773 l5.5-5.5 l5.5 5.5" fill="none" stroke="#eee" stroke-width="1.3"/>
<rect x="1252" y="766" width="11" height="8" fill="none" stroke="#eee" stroke-width="1.1"/><rect x="1263" y="768.5" width="1.5" height="3" fill="#eee"/>
<rect x="1249.5" y="765" width="2.5" height="9" fill="#eee"/>
<path d="M1271.5 767 h2.5 l3.5-3.5 v13 l-3.5-3.5 h-2.5z" fill="none" stroke="#eee" stroke-width="1.1"/>
<path d="M1279.5 767.5 q1.5 2.5 0 5 M1282 765.5 q3 4.5 0 9 M1284.5 764 q4 6 0 12" fill="none" stroke="#aaa" stroke-width="0.9"/>
<path d="M1362.5 762 h15.5 v13 h-6 l-4 4 v-4 h-5.5z" fill="#f4f4f4"/>
<g stroke="#666" stroke-width="0.9"><line x1="1365" y1="765.5" x2="1375.5" y2="765.5"/><line x1="1365" y1="768.5" x2="1375.5" y2="768.5"/><line x1="1365" y1="771.5" x2="1372" y2="771.5"/></g>
<circle cx="1377" cy="777" r="6.8" fill="#23292e" stroke="#9a9a9a" stroke-width="0.9"/>
<text x="1377" y="780.8" font-family="Liberation Sans" font-size="10.5" font-weight="bold" fill="#fff" text-anchor="middle">2</text>
<rect x="1396" y="751" width="1" height="37" fill="#555"/>
</svg>
<div class="a" style="left:80px;top:761.5px;font-size:13.7px;line-height:16px;color:#e3e3e3;white-space:nowrap">Wpisz tu wyszukiwane słowa</div>
<div class="a" style="left:1307.5px;top:756px;font-size:10px;line-height:12px;color:#fff;white-space:nowrap">17:09</div>
<div class="a" style="left:1295.5px;top:772.3px;font-size:10px;line-height:12px;color:#fff;white-space:nowrap">14.05.2021</div>

</body></html>
